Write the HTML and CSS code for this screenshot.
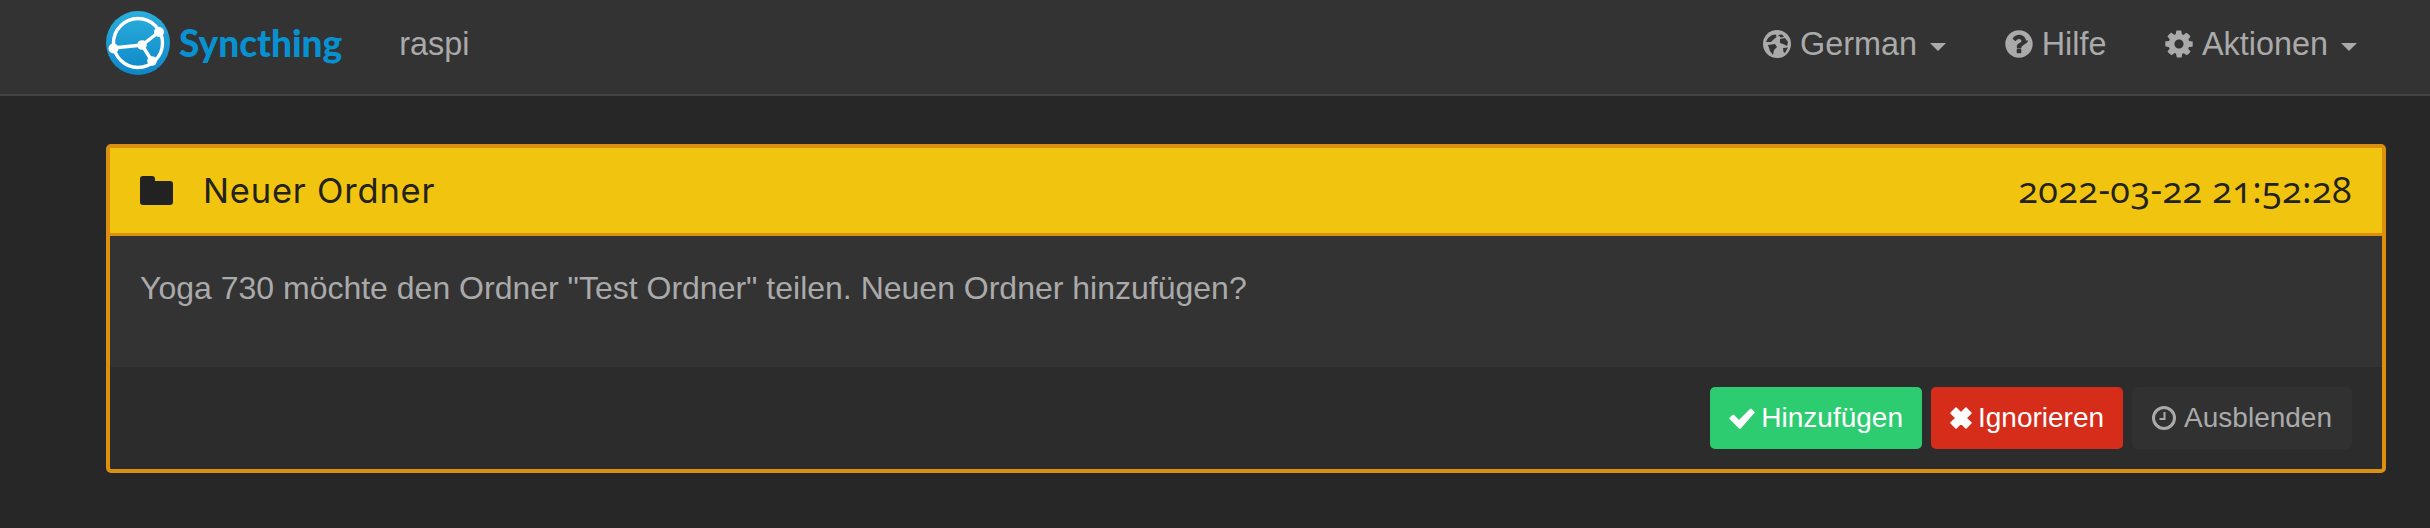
FILE: index.html
```html
<!DOCTYPE html>
<html lang="de">
<head>
  <meta charset="UTF-8" />
  <title>Syncthing</title>
  <link rel="stylesheet" href="styles.css">
</head>
<body>
  <header class="navbar">
    <a class="brand" href="#">
      <svg class="logo" viewBox="0 0 64 64" aria-hidden="true">
        <defs>
          <linearGradient id="logo-fill" x1="0" y1="0" x2="0" y2="1">
            <stop offset="0" stop-color="#2bafdc" />
            <stop offset="1" stop-color="#0e86c9" />
          </linearGradient>
        </defs>
        <circle cx="32" cy="32" r="32" fill="url(#logo-fill)" />
        <g stroke="#fff" fill="none" stroke-width="3.4">
          <circle cx="32" cy="32" r="24.500" />
          <path d="M7 37 36 34 53 21M36 34 46 50" />
        </g>
        <g fill="#fff">
          <circle cx="7.500" cy="37.500" r="5" />
          <circle cx="36" cy="34" r="4.800" />
          <circle cx="53" cy="21" r="5" />
          <circle cx="46" cy="50" r="4.800" />
        </g>
      </svg>
      <span class="brand-name">Syncthing</span>
    </a>
    <span class="device-name">raspi</span>
    <nav class="nav-right">
      <a href="#" class="nav-link">
        <svg class="icon" viewBox="0 0 28 28" aria-hidden="true">
          <circle cx="14" cy="14" r="14" fill="#aaa" />
          <path d="M3 12 5 8 9 5 13 4.500 13.500 7 10 10 8 12Z" fill="#333" />
          <path d="M15 5 19 4.500 21 7 18 7.500Z" fill="#333" />
          <path d="M17 9 22 8 25 12 24 16 20 14 17 13Z" fill="#333" />
          <path d="M5 15 12 14 14 17 11 20 10 25 7 21Z" fill="#333" />
          <path d="M20 18 25 17.500 22 23 20.500 22Z" fill="#333" />
        </svg>
        <span>German</span><i class="caret"></i>
      </a>
      <a href="#" class="nav-link">
        <svg class="icon" viewBox="0 0 24 28" aria-hidden="true">
          <path fill="#aaa" d="M14 21.500v-3c0-.3-.2-.5-.5-.5h-3c-.3 0-.5.2-.5.5v3c0 .3.2.5.5.5h3c.3 0 .5-.2.5-.5zm4-10.500c0-2.900-3-5-5.700-5-2.600 0-4.500 1.100-5.800 3.100-.1.200-.1.400.1.600l2.100 1.600c.1.100.2.100.3.100.1 0 .3-.1.4-.2.700-1 1.300-1.600 2.600-1.600 1.100 0 2.100.7 2.100 1.500 0 1-.5 1.500-1.600 2-1.300.6-2.400 1.600-2.400 3v1c0 .3.200.5.500.5h3c.300 0 .5-.200.5-.5 0-.8 1-1.800 2.200-2.500 1.900-1.100 3.600-2.100 3.600-3.600zM24 14c0 6.600-5.400 12-12 12S0 20.600 0 14 5.400 2 12 2s12 5.400 12 12z" />
        </svg>
        <span>Hilfe</span>
      </a>
      <a href="#" class="nav-link">
        <svg class="icon" viewBox="0 0 24 28" aria-hidden="true">
          <path fill="#aaa" d="M16 14c0-2.200-1.800-4-4-4s-4 1.800-4 4 1.800 4 4 4 4-1.800 4-4zm8-1.700v3.500c0 .2-.2.500-.4.500l-2.900.4c-.2.500-.4 1-.6 1.400.5.800 1.100 1.500 1.800 2.300.1.100.1.200.1.300 0 .1 0 .2-.1.300-.4.500-2.500 2.800-3.100 2.800-.1 0-.3-.1-.4-.1l-2.200-1.700c-.5.200-.9.400-1.400.6-.1 1-.2 2-.5 2.900-.1.200-.2.300-.4.300h-3.500c-.2 0-.4-.2-.5-.4l-.4-2.900c-.5-.2-1-.4-1.400-.6l-2.200 1.700c-.1.100-.3.100-.4.100-.1 0-.3-.1-.4-.1-.7-.6-3.100-2.300-3.100-3 0-.1.100-.2.100-.3.500-.7 1.100-1.400 1.700-2.200-.3-.5-.5-1-.7-1.500L.4 16.200c-.2 0-.4-.3-.4-.5v-3.500c0-.2.200-.5.400-.5l2.900-.4c.2-.5.400-1 .6-1.400-.5-.8-1.100-1.500-1.800-2.300-.1-.1-.1-.2-.1-.3 0-.1 0-.2.100-.3.400-.5 2.500-2.800 3.100-2.800.1 0 .3.100.4.100l2.200 1.700c.5-.2.900-.4 1.400-.6.100-1 .2-2 .5-2.900.1-.2.200-.3.400-.3h3.500c.2 0 .4.200.5.400l.4 2.900c.5.200 1 .4 1.400.6l2.200-1.700c.1-.1.300-.1.400-.1.100 0 .3.100.4.100.7.600 3.100 2.400 3.100 3 0 .1-.1.200-.1.300-.5.700-1.100 1.400-1.700 2.200.3.500.5 1 .7 1.500l2.900.4c.2 0 .4.300.4.500z" />
        </svg>
        <span>Aktionen</span><i class="caret"></i>
      </a>
    </nav>
  </header>

  <main class="content">
    <section class="panel">
      <div class="panel-heading">
        <svg class="folder-icon" viewBox="0 0 33 29" aria-hidden="true">
          <path fill="#222" d="M3 0h9c2 0 3 1 3 3v2h15c2 0 3 1 3 3v18c0 2-1 3-3 3H3c-2 0-3-1-3-3V3c0-2 1-3 3-3z" />
        </svg>
        <h3 class="panel-title">Neuer Ordner</h3>
        <span class="panel-time">2022-03-22 21:52:28</span>
      </div>
      <div class="panel-body">
        <p>Yoga 730 möchte den Ordner "Test Ordner" teilen. Neuen Ordner hinzufügen?</p>
      </div>
      <div class="panel-footer">
        <button class="btn btn-success">
          <svg class="btn-icon" viewBox="0 0 26 22" aria-hidden="true">
            <path fill="#fff" d="M10 21.500 0.800 12.300c-.5-.5-.5-1.200 0-1.700l2.600-2.600c.5-.5 1.200-.5 1.700 0L10 12.900 20.900 2c.5-.5 1.200-.5 1.700 0l2.600 2.600c.5.500.5 1.200 0 1.700L11.700 21.500c-.5.500-1.200.5-1.700 0z" />
          </svg>
          Hinzufügen
        </button>
        <button class="btn btn-danger">
          <svg class="btn-icon btn-icon-x" viewBox="0 0 20 20" aria-hidden="true">
            <path fill="#fff" d="M1 5.500 5.500 1 10 5.500 14.500 1 19 5.500 14.500 10 19 14.500 14.500 19 10 14.500 5.500 19 1 14.500 5.500 10Z" stroke="#fff" stroke-width="1.500" stroke-linejoin="round" />
          </svg>
          Ignorieren
        </button>
        <button class="btn btn-default">
          <svg class="btn-icon btn-icon-clock" viewBox="0 0 24 24" aria-hidden="true">
            <circle cx="12" cy="12" r="10.500" fill="none" stroke="#aaa" stroke-width="3" />
            <path d="M12.500 6v7H7.500" fill="none" stroke="#aaa" stroke-width="2" />
          </svg>
          Ausblenden
        </button>
      </div>
    </section>
  </main>
</body>
</html>
```

FILE: styles.css
```css
* {
  box-sizing: border-box;
  margin: 0;
  padding: 0;
}
body {
  font-family: "Liberation Sans", Arial, sans-serif;
  background: #272727;
  color: #aaa;
  overflow: hidden;
}
a {
  color: #aaa;
  text-decoration: none;
}

/* Navbar */
.navbar {
  height: 96px;
  background: #333;
  border-bottom: 2px solid #444;
  display: flex;
  align-items: center;
  padding: 0 73px 6px 106px;
  font-size: 32.4px;
}
.brand {
  display: flex;
  align-items: center;
  gap: 9px;
  margin-top: -3px;
}
.logo {
  width: 64px;
  height: 64px;
}
.brand-name {
  font-family: Lato, sans-serif;
  font-weight: 900;
  font-size: 37px;
  color: #0891d1;
}
.device-name {
  margin-left: 57px;
}
.nav-right {
  margin-left: auto;
  display: flex;
  gap: 58.500px;
}
.nav-link {
  display: flex;
  align-items: center;
}
.icon {
  width: 28px;
  height: 32px;
  margin-right: 9px;
}
.caret {
  width: 0;
  height: 0;
  margin-left: 13px;
  margin-top: 6px;
  border-left: 8px solid transparent;
  border-right: 8px solid transparent;
  border-top: 8px solid #aaa;
}

/* Panel */
.content {
  padding: 48px 44px 0 106px;
}
.panel {
  border: 4px solid #dc9010;
  border-radius: 5px;
  background: #2c2c2c;
}
.panel-heading {
  height: 88px;
  background: #f1c40f;
  border-bottom: 3px solid #dc9010;
  color: #222;
  display: flex;
  align-items: center;
  padding: 0 30px;
}
.folder-icon {
  width: 33px;
  height: 29px;
  margin-right: 30px;
}
.panel-title {
  font-family: Inter, sans-serif;
  font-weight: 400;
  font-size: 34.500px;
  letter-spacing: 0.800px;
}
.panel-time {
  margin-left: auto;
  margin-top: -2px;
  font-family: "Open Sans", sans-serif;
  font-size: 36px;
  letter-spacing: 0.400px;
  font-variant-numeric: oldstyle-nums;
}
.panel-body {
  height: 131px;
  background: #333;
  padding: 30px;
  font-size: 32px;
  line-height: 44px;
}
.panel-footer {
  height: 102px;
  padding: 20px 30px;
  display: flex;
  justify-content: flex-end;
  gap: 9px;
}

/* Buttons */
.btn {
  height: 62px;
  padding: 0 19px;
  border: 0;
  border-radius: 5px;
  font-family: inherit;
  font-size: 28px;
  color: #fff;
  display: flex;
  align-items: center;
  gap: 6px;
}
.btn-success {
  background: #2ecc71;
}
.btn-danger {
  background: #d62c1a;
}
.btn-default {
  background: #313131;
  color: #aaa;
  gap: 8px;
  padding: 0 20px;
}
.btn-icon {
  width: 26px;
  height: 22px;
}
.btn-icon-x {
  width: 22px;
  height: 22px;
}
.btn-icon-clock {
  width: 24px;
  height: 24px;
}
```
